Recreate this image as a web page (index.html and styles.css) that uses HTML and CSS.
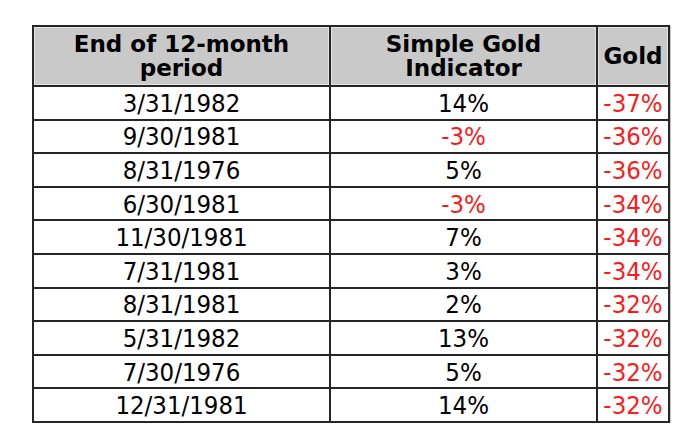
FILE: index.html
```html
<!DOCTYPE html>
<html>
<head>
<meta charset="utf-8">
<link rel="stylesheet" href="styles.css">
</head>
<body>
<table class="gold-table">
  <colgroup>
    <col class="c-date">
    <col class="c-sgi">
    <col class="c-gold">
  </colgroup>
  <thead>
    <tr class="head-row">
      <th>End of 12-month<br>period</th>
      <th>Simple Gold<br>Indicator</th>
      <th>Gold</th>
    </tr>
  </thead>
  <tbody>
    <tr><td>3/31/1982</td><td>14%</td><td class="neg">-37%</td></tr>
    <tr><td>9/30/1981</td><td class="neg">-3%</td><td class="neg">-36%</td></tr>
    <tr><td>8/31/1976</td><td>5%</td><td class="neg">-36%</td></tr>
    <tr><td>6/30/1981</td><td class="neg">-3%</td><td class="neg">-34%</td></tr>
    <tr><td>11/30/1981</td><td>7%</td><td class="neg">-34%</td></tr>
    <tr><td>7/31/1981</td><td>3%</td><td class="neg">-34%</td></tr>
    <tr><td>8/31/1981</td><td>2%</td><td class="neg">-32%</td></tr>
    <tr><td>5/31/1982</td><td>13%</td><td class="neg">-32%</td></tr>
    <tr><td>7/30/1976</td><td>5%</td><td class="neg">-32%</td></tr>
    <tr><td>12/31/1981</td><td>14%</td><td class="neg">-32%</td></tr>
  </tbody>
</table>
</body>
</html>
```

FILE: styles.css
```css
html, body {
  margin: 0;
  padding: 0;
  background: #ffffff;
}

body {
  padding: 25px 0 0 32px;
  font-family: "DejaVu Sans Condensed", "DejaVu Sans", sans-serif;
  font-stretch: condensed;
}

.gold-table {
  border-collapse: collapse;
  table-layout: fixed;
  width: 636px;
  box-shadow: 1px 1px 0 #c8c8c8;
}

.c-date { width: 297px; }
.c-sgi { width: 267px; }
.c-gold { width: 72px; }

.gold-table th,
.gold-table td {
  border: 2px solid #262626;
  padding: 0;
  text-align: center;
  vertical-align: middle;
}

.gold-table th {
  background: #c9c9c9;
  color: #000;
  font-family: "DejaVu Sans", sans-serif;
  font-stretch: normal;
  font-weight: bold;
  font-size: 23px;
  line-height: 24px;
  height: 58px;
  box-shadow: inset 0 0 0 1px #e4e4e4;
}

.gold-table td {
  color: #000;
  font-size: 25.5px;
  line-height: 28px;
  height: 31.6px;
}

.gold-table td.neg {
  color: #ff1a1a;
}
```
